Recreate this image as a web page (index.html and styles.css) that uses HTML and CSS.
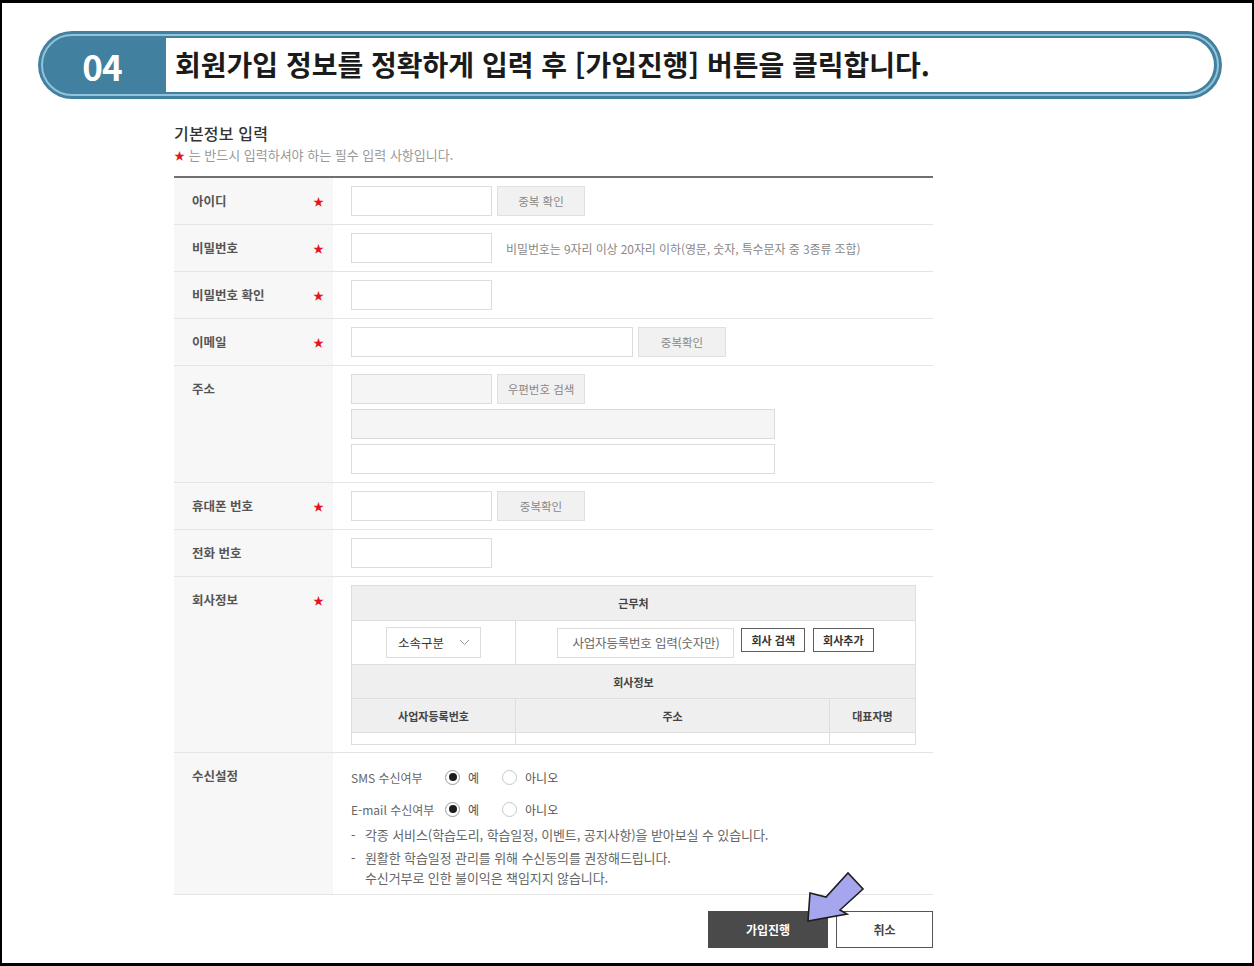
FILE: index.html
```html
<!DOCTYPE html>
<html lang="ko">
<head>
    <meta charset="UTF-8">
    <meta name="viewport" content="width=device-width, initial-scale=1.0">
    <title>회원가입 안내 04</title>

    <link rel="stylesheet" href="styles.css">
</head>
<body>

<div class="page">

  <div class="step">
    <div class="step__num">04</div>
    <div class="step__text">회원가입 정보를 정확하게 입력 후 [가입진행] 버튼을 클릭합니다.</div>
  </div>

  <div class="form">
    <h2 class="form__title">기본정보 입력</h2>
    <p class="form__note"><span class="req">★</span> 는 반드시 입력하셔야 하는 필수 입력 사항입니다.</p>

    <div class="form-table">

      <div class="row">
        <div class="row__label"><span>아이디</span><span class="req">★</span></div>
        <div class="row__field">
          <span class="input"></span>
          <span class="btn-gray">중복 확인</span>
        </div>
      </div>

      <div class="row">
        <div class="row__label"><span>비밀번호</span><span class="req">★</span></div>
        <div class="row__field">
          <span class="input"></span>
          <span class="help">비밀번호는 9자리 이상 20자리 이하(영문, 숫자, 특수문자 중 3종류 조합)</span>
        </div>
      </div>

      <div class="row">
        <div class="row__label"><span>비밀번호 확인</span><span class="req">★</span></div>
        <div class="row__field">
          <span class="input"></span>
        </div>
      </div>

      <div class="row">
        <div class="row__label"><span>이메일</span><span class="req">★</span></div>
        <div class="row__field">
          <span class="input input--mid"></span>
          <span class="btn-gray">중복확인</span>
        </div>
      </div>

      <div class="row">
        <div class="row__label"><span>주소</span></div>
        <div class="row__field row__field--stack">
          <div class="line">
            <span class="input input--readonly"></span>
            <span class="btn-gray">우편번호 검색</span>
          </div>
          <span class="input input--long input--readonly"></span>
          <span class="input input--long"></span>
        </div>
      </div>

      <div class="row">
        <div class="row__label"><span>휴대폰 번호</span><span class="req">★</span></div>
        <div class="row__field">
          <span class="input"></span>
          <span class="btn-gray">중복확인</span>
        </div>
      </div>

      <div class="row">
        <div class="row__label"><span>전화 번호</span></div>
        <div class="row__field">
          <span class="input"></span>
        </div>
      </div>

      <div class="row">
        <div class="row__label"><span>회사정보</span><span class="req">★</span></div>
        <div class="row__field row__field--company">
          <table class="company">
            <tr class="company__head">
              <th colspan="3">근무처</th>
            </tr>
            <tr class="company__search">
              <td>
                <span class="select">소속구분
                  <svg width="11" height="7" viewBox="0 0 11 7"><polyline points="1,1 5.5,5.5 10,1" fill="none" stroke="#999" stroke-width="1"/></svg>
                </span>
              </td>
              <td colspan="2">
                <div class="company__group">
                  <span class="input input--biz">사업자등록번호 입력(숫자만)</span>
                  <span class="btn-line">회사 검색</span>
                  <span class="btn-line">회사추가</span>
                </div>
              </td>
            </tr>
            <tr class="company__head">
              <th colspan="3">회사정보</th>
            </tr>
            <tr class="company__head company__cols">
              <th class="col-biz">사업자등록번호</th>
              <th>주소</th>
              <th class="col-ceo">대표자명</th>
            </tr>
            <tr class="company__empty">
              <td></td><td></td><td></td>
            </tr>
          </table>
        </div>
      </div>

      <div class="row">
        <div class="row__label"><span>수신설정</span></div>
        <div class="row__field row__field--stack row__field--recv">
          <div class="recv">
            <span class="recv__label">SMS 수신여부</span>
            <span class="radio radio--on"></span><span class="recv__opt">예</span>
            <span class="radio"></span><span class="recv__opt">아니오</span>
          </div>
          <div class="recv">
            <span class="recv__label">E-mail 수신여부</span>
            <span class="radio radio--on"></span><span class="recv__opt">예</span>
            <span class="radio"></span><span class="recv__opt">아니오</span>
          </div>
          <p class="notice"><span class="notice__dash">-</span><span>각종 서비스(학습도리, 학습일정, 이벤트, 공지사항)을 받아보실 수 있습니다.</span></p>
          <p class="notice notice--second"><span class="notice__dash">-</span><span>원활한 학습일정 관리를 위해 수신동의를 권장해드립니다.<br>수신거부로 인한 불이익은 책임지지 않습니다.</span></p>
        </div>
      </div>

    </div>

    <div class="actions">
      <span class="btn-submit">가입진행</span>
      <span class="btn-cancel">취소</span>
    </div>
  </div>

  <!-- pointer arrow drawn over the submit button -->
  <svg class="pointer" width="70" height="62" viewBox="0 0 70 62">
    <polygon points="8,55 10,27 26,31 48,7 63,23 40,44 47,48" fill="#a6a6ee" stroke="#1e1e1e" stroke-width="1.6" stroke-linejoin="miter"/>
  </svg>

</div>

</body>
</html>
```

FILE: styles.css
```css
*,
*::before,
*::after {
  box-sizing: border-box;
}

body {
  margin: 0;
  font-family: "Noto Sans CJK KR", "Noto Sans", sans-serif;
  color: #333;
  background: #fff;
}

.page {
  position: relative;
  height: 966px;
  border: 3px solid #000;
  border-left-width: 2px;
  border-right-width: 2px;
  overflow: hidden;
}

/* step header pill */

.step {
  position: relative;
  display: flex;
  height: 68px;
  margin: 28px 30px 0 36px;
  padding: 7px 8px 7px 0;
  border-radius: 34px;
  background: #42809f;
}

.step::before {
  content: "";
  position: absolute;
  top: 3px;
  left: 3px;
  right: 3px;
  bottom: 3px;
  border: 2px solid #93c3dc;
  border-radius: 31px;
}

.step__num {
  width: 128px;
  display: flex;
  align-items: center;
  justify-content: center;
  color: #fff;
  font-size: 35px;
  font-weight: 700;
  letter-spacing: -1px;
}

.step__text {
  position: relative;
  z-index: 1;
  flex: 1;
  display: flex;
  align-items: center;
  padding: 0 0 2px 9px;
  background: #fff;
  border-radius: 0 27px 27px 0;
  color: #1b1b1b;
  font-size: 28px;
  font-weight: 700;
  letter-spacing: 0;
}

/* form */

.form {
  width: 759px;
  margin: 24px 0 0 172px;
}

.form__title {
  margin: 0;
  font-size: 16px;
  line-height: 20px;
  font-weight: 500;
  color: #333;
  letter-spacing: 0.2px;
}

.form__note {
  margin: 4px 0 0;
  font-size: 13px;
  line-height: 16px;
  color: #999;
  letter-spacing: 0;
}

.req {
  color: #e3151c;
  font-size: 11px;
}

.form-table {
  margin-top: 13px;
  border-top: 2px solid #707070;
}

.row {
  display: grid;
  grid-template-columns: 159px 1fr;
  border-bottom: 1px solid #e4e4e4;
}

.row__label {
  display: flex;
  justify-content: space-between;
  align-items: flex-start;
  padding: 8px 9px 0 18px;
  background: #f7f7f7;
  line-height: 30px;
  font-size: 12.5px;
  font-weight: 700;
  color: #555;
}

.row__field {
  display: flex;
  align-items: center;
  gap: 5px;
  padding: 8px 0 8px 18px;
}

.row__field--stack {
  flex-direction: column;
  align-items: flex-start;
}

.row__field--company {
  padding-bottom: 7px;
}

.line {
  display: flex;
  gap: 5px;
}

.input {
  display: inline-block;
  width: 141px;
  height: 30px;
  border: 1px solid #dcdcdc;
  background: #fff;
}

.input--mid {
  width: 282px;
}

.input--long {
  width: 424px;
}

.input--readonly {
  background: #f5f5f5;
}

.btn-gray {
  display: inline-flex;
  align-items: center;
  justify-content: center;
  width: 88px;
  height: 30px;
  border: 1px solid #e0e0e0;
  background: #f1f1f1;
  color: #888;
  font-size: 11.5px;
}

.help {
  margin-left: 9px;
  font-size: 12px;
  color: #888;
  letter-spacing: -0.1px;
}

/* company table */

.company {
  width: 565px;
  border-collapse: collapse;
  font-size: 11px;
}

.company th,
.company td {
  border: 1px solid #dedede;
  padding: 0;
  text-align: center;
}

.company__head th {
  height: 34px;
  background: #efefef;
  font-weight: 700;
  color: #444;
}

.company__head:first-child th {
  height: 35px;
}

.company__search td {
  height: 44px;
}

.company .col-biz {
  width: 164px;
}

.company .col-ceo {
  width: 86px;
}

.company__empty td {
  height: 12px;
}

.select {
  display: inline-flex;
  align-items: center;
  justify-content: space-between;
  width: 95px;
  height: 31px;
  padding: 0 10px 0 11px;
  border: 1px solid #dcdcdc;
  font-size: 12.5px;
  color: #333;
}

.company__group {
  display: flex;
  justify-content: center;
  align-items: flex-start;
  gap: 7px;
  padding-left: 0;
}

.input--biz {
  width: 177px;
  display: flex;
  align-items: center;
  justify-content: center;
  font-size: 12.5px;
  color: #666;
  letter-spacing: -0.2px;
}

.btn-line {
  display: inline-flex;
  align-items: center;
  justify-content: center;
  height: 24px;
  padding: 0 9px;
  border: 1.5px solid #5e5e5e;
  background: #fff;
  font-size: 11px;
  font-weight: 700;
  color: #333;
}

.btn-line + .btn-line {
  margin-left: 1px;
}

/* receive settings */

.row__field--recv {
  gap: 0;
  padding-bottom: 6px;
}

.recv {
  display: flex;
  align-items: center;
  height: 32px;
  font-size: 12px;
  color: #666;
}

.recv__label {
  width: 94px;
}

.recv__opt {
  margin: 0 23px 0 8px;
  color: #555;
}

.radio {
  width: 15px;
  height: 15px;
  border: 1px solid #c8c8c8;
  border-radius: 50%;
  background: #fff;
  display: inline-flex;
  align-items: center;
  justify-content: center;
}

.radio--on {
  border-color: #9a9a9a;
}

.radio--on::after {
  content: "";
  width: 8px;
  height: 8px;
  border-radius: 50%;
  background: #1c1c1c;
}

.notice {
  display: flex;
  margin: 0;
  font-size: 13px;
  line-height: 20px;
  color: #666;
  letter-spacing: -0.1px;
}

.notice--second {
  margin-top: 3px;
}

.notice__dash {
  width: 14px;
}

/* bottom buttons */

.actions {
  display: flex;
  justify-content: flex-end;
  gap: 8px;
  margin-top: 16px;
}

.btn-submit,
.btn-cancel {
  display: inline-flex;
  align-items: center;
  justify-content: center;
  height: 37px;
  font-size: 12px;
  font-weight: 700;
}

.btn-submit {
  width: 120px;
  background: #4a4a4a;
  color: #fff;
}

.btn-cancel {
  width: 97px;
  border: 1px solid #555;
  background: #fff;
  color: #444;
}

.pointer {
  position: absolute;
  left: 798px;
  top: 863px;
}
```
